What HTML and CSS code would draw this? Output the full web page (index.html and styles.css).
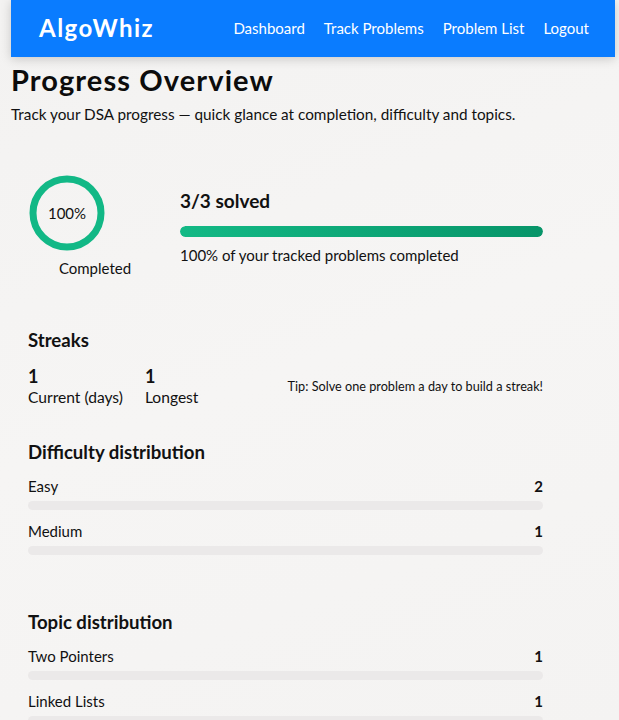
FILE: index.html
```html
<!DOCTYPE html>
<html lang="en">
<head>
<meta charset="utf-8">
<title>AlgoWhiz – Progress Overview</title>
<link rel="stylesheet" href="styles.css">
</head>
<body>
<div class="page">
  <header class="nav">
    <div class="brand">AlgoWhiz</div>
    <nav class="links">
      <a href="#">Dashboard</a>
      <a href="#">Track Problems</a>
      <a href="#">Problem List</a>
      <a href="#">Logout</a>
    </nav>
  </header>

  <h1 class="title">Progress Overview</h1>
  <p class="subtitle">Track your DSA progress — quick glance at completion, difficulty and topics.</p>

  <section class="card progress">
    <div class="ring-col">
      <div class="ring">
        <svg width="76" height="76" viewBox="0 0 76 76" aria-hidden="true">
          <circle cx="38" cy="38" r="34" fill="none" stroke="#12b886" stroke-width="7"/>
        </svg>
        <span class="ring-value">100%</span>
      </div>
      <div class="ring-label">Completed</div>
    </div>
    <div class="summary">
      <h2 class="solved">3/3 solved</h2>
      <div class="bar"><div class="bar-fill" style="width:100%"></div></div>
      <p class="summary-text">100% of your tracked problems completed</p>
    </div>
  </section>

  <section class="card streaks">
    <h3 class="card-title">Streaks</h3>
    <div class="streak-row">
      <div class="stat">
        <div class="stat-num">1</div>
        <div class="stat-label">Current (days)</div>
      </div>
      <div class="stat">
        <div class="stat-num">1</div>
        <div class="stat-label">Longest</div>
      </div>
      <div class="tip">Tip: Solve one problem a day to build a streak!</div>
    </div>
  </section>

  <section class="card dist">
    <h3 class="card-title">Difficulty distribution</h3>
    <div class="dist-item">
      <div class="dist-head"><span>Easy</span><strong>2</strong></div>
      <div class="track"></div>
    </div>
    <div class="dist-item">
      <div class="dist-head"><span>Medium</span><strong>1</strong></div>
      <div class="track"></div>
    </div>
  </section>

  <section class="card dist topics">
    <h3 class="card-title">Topic distribution</h3>
    <div class="dist-item">
      <div class="dist-head"><span>Two Pointers</span><strong>1</strong></div>
      <div class="track"></div>
    </div>
    <div class="dist-item">
      <div class="dist-head"><span>Linked Lists</span><strong>1</strong></div>
      <div class="track"></div>
    </div>
  </section>
</div>
</body>
</html>
```
FILE: styles.css
```css
* { box-sizing: border-box; }

html, body {
  margin: 0;
  padding: 0;
}

body {
  font-family: "Segoe UI", Lato, "Noto Sans", sans-serif;
  color: #111;
  background: linear-gradient(160deg, #f3f2f1 0%, #f6f5f4 50%, #f4f3f2 100%);
  min-height: 720px;
}

.page {
  padding: 0 4px 0 11px;
}

.nav {
  height: 57px;
  background: #0a7cff;
  display: flex;
  align-items: center;
  justify-content: space-between;
  padding: 0 26px 2px 28px;
  box-shadow: 0 2px 10px rgba(0, 0, 0, 0.18);
}

.brand {
  color: #fff;
  font-size: 24px;
  font-weight: 700;
  letter-spacing: 1.5px;
}

.links {
  display: flex;
  gap: 19px;
}

.links a {
  color: #fff;
  text-decoration: none;
  font-size: 15px;
}

.title {
  margin: 6px 0 0;
  font-size: 29px;
  font-weight: 700;
  line-height: 34px;
  letter-spacing: 1.1px;
  color: #0c0c0c;
}

.subtitle {
  margin: 7px 0 0;
  font-size: 15.3px;
  line-height: 20px;
}

.card {
  width: 549px;
  padding: 0 17px;
}

.progress {
  display: flex;
  align-items: flex-start;
  gap: 18px;
  margin-top: 51px;
}

.ring-col {
  width: 134px;
  display: flex;
  flex-direction: column;
}

.ring {
  position: relative;
  width: 76px;
  height: 76px;
  margin-left: 1px;
}

.ring svg { display: block; }

.ring-value {
  position: absolute;
  inset: 0;
  display: flex;
  align-items: center;
  justify-content: center;
  font-size: 15px;
}

.ring-label {
  align-self: center;
  font-size: 15px;
  line-height: 20px;
  margin-top: 7px;
}

.summary {
  flex: 1;
  padding-top: 14px;
}

.solved {
  margin: 0;
  font-size: 19px;
  font-weight: 700;
  line-height: 24px;
}

.bar {
  margin-top: 13px;
  height: 11px;
  border-radius: 6px;
  background: #e6e6e6;
  overflow: hidden;
}

.bar-fill {
  height: 100%;
  border-radius: 6px;
  background: linear-gradient(90deg, #13b985, #079569);
}

.summary-text {
  margin: 8px 0 0;
  font-size: 15px;
  line-height: 20px;
}

.card-title {
  margin: 0;
  font-size: 18.6px;
  font-weight: 700;
  line-height: 24px;
}

.streaks {
  margin-top: 50px;
}

.streak-row {
  display: flex;
  align-items: center;
  margin-top: 13px;
}

.stat {
  margin-right: 22px;
}

.stat-num {
  font-size: 18px;
  font-weight: 700;
  line-height: 22px;
}

.stat-label {
  font-size: 15.6px;
  line-height: 20px;
}

.tip {
  margin-left: auto;
  font-size: 12.7px;
  line-height: 18px;
}

.dist {
  margin-top: 33px;
}

.topics {
  margin-top: 55px;
}

.dist-item {
  margin-top: 12px;
}

.dist-item + .dist-item {
  margin-top: 11px;
}

.dist-head {
  display: flex;
  justify-content: space-between;
  font-size: 15px;
  line-height: 20px;
}

.dist-head strong {
  font-weight: 700;
}

.track {
  margin-top: 5px;
  height: 9px;
  border-radius: 5px;
  background: #ebe9e9;
}
```
